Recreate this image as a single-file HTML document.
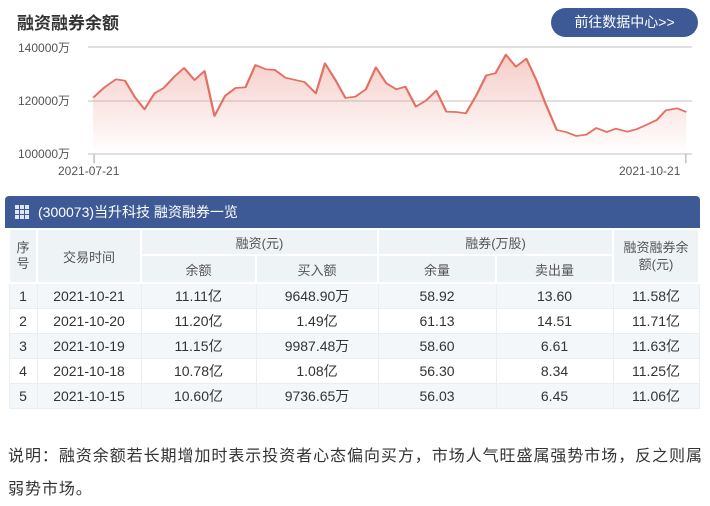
<!DOCTYPE html><html><head><meta charset="utf-8"><style>
body{margin:0;width:710px;height:504px;background:#fff;font-family:"Liberation Sans","Noto Sans CJK SC",sans-serif;color:#333;position:relative;overflow:hidden}
.a{position:absolute}
table{position:absolute;left:8px;top:228px;width:692px;border-collapse:collapse;font-size:14px;table-layout:fixed}
td{text-align:center;height:24px;padding:0;border:1px solid #e8eef2;color:#333}
.h td{background:#eef3f6;color:#555;font-size:13px;border:2px solid #fff}
tr.o td{background:#f3f7f9}
</style></head><body>
<div class="a" style="left:17px;top:9px;font-size:17px;font-weight:bold;color:#333">融资融券余额</div>
<div class="a" style="left:551px;top:8px;width:147px;height:29px;background:#3e5a96;border-radius:15px;color:#fff;font-size:14px;line-height:29px;text-align:center">前往数据中心&gt;&gt;</div>
<svg class="a" style="left:0;top:0" width="710" height="180">
<defs><linearGradient id="g" x1="0" y1="0" x2="0" y2="1"><stop offset="0" stop-color="#eb9a90" stop-opacity=".5"/><stop offset="1" stop-color="#eb9a90" stop-opacity="0"/></linearGradient></defs>
<g stroke="#d6d6d6" stroke-width="1.5"><line x1="88" y1="47" x2="692" y2="47"/><line x1="88" y1="101" x2="692" y2="101"/><line x1="88" y1="154" x2="692" y2="154"/></g>
<g transform="scale(0.4545,0.3333)">
<polygon fill="url(#g)" points="205,462 205,293 230,262 255,238 275,242 297,292 318,328 340,280 360,264 385,228 405,204 428,240 450,213 472,348 495,288 518,264 540,262 562,195 585,208 605,210 628,233 650,240 670,246 695,280 715,190 738,240 760,294 782,290 805,268 827,202 850,250 872,268 892,260 915,320 937,302 960,272 982,335 1003,336 1025,340 1048,286 1070,226 1090,220 1113,164 1135,200 1158,176 1180,240 1200,310 1225,390 1245,396 1268,408 1290,404 1312,384 1335,396 1355,386 1380,395 1400,388 1420,376 1445,360 1465,331 1490,325 1510,336 1510,462"/>
<polyline fill="none" stroke="#e46f62" stroke-width="5" stroke-linejoin="round" points="205,293 230,262 255,238 275,242 297,292 318,328 340,280 360,264 385,228 405,204 428,240 450,213 472,348 495,288 518,264 540,262 562,195 585,208 605,210 628,233 650,240 670,246 695,280 715,190 738,240 760,294 782,290 805,268 827,202 850,250 872,268 892,260 915,320 937,302 960,272 982,335 1003,336 1025,340 1048,286 1070,226 1090,220 1113,164 1135,200 1158,176 1180,240 1200,310 1225,390 1245,396 1268,408 1290,404 1312,384 1335,396 1355,386 1380,395 1400,388 1420,376 1445,360 1465,331 1490,325 1510,336"/>
<line x1="207" y1="462" x2="207" y2="490" stroke="#bbb" stroke-width="3"/><line x1="1509" y1="462" x2="1509" y2="490" stroke="#bbb" stroke-width="3"/>
</g>
<g font-size="12" fill="#555" font-family="Liberation Sans,Noto Sans CJK SC,sans-serif"><text x="18" y="52">140000万</text><text x="18" y="105">120000万</text><text x="18" y="158">100000万</text><text x="58" y="175">2021-07-21</text><text x="619" y="175">2021-10-21</text></g>
</svg>
<div class="a" style="left:5px;top:196px;width:695px;height:32px;background:#3e5a96;border-radius:4px 4px 0 0;color:#fff;font-size:14px;line-height:32px">
<svg style="position:absolute;left:10px;top:9px" width="14" height="14"><rect width="14" height="14" fill="#dfe5f0"/><g stroke="#3e5a96" stroke-width="1"><line x1="0" y1="4.5" x2="14" y2="4.5"/><line x1="0" y1="9.5" x2="14" y2="9.5"/><line x1="4.5" y1="0" x2="4.5" y2="14"/><line x1="9.5" y1="0" x2="9.5" y2="14"/></g></svg>
<span style="position:absolute;left:33px">(300073)当升科技 融资融券一览</span></div>
<table>
<colgroup><col style="width:28px"><col style="width:104px"><col style="width:115px"><col style="width:122px"><col style="width:118px"><col style="width:117px"><col></colgroup>
<tr class="h"><td rowspan="2" style="line-height:16px">序<br>号</td><td rowspan="2">交易时间</td><td colspan="2">融资(元)</td><td colspan="2">融券(万股)</td><td rowspan="2" style="line-height:17px">融资融券余<br>额(元)</td></tr>
<tr class="h" style="height:28px"><td>余额</td><td>买入额</td><td>余量</td><td>卖出量</td></tr>
<tr class="o"><td>1</td><td>2021-10-21</td><td>11.11亿</td><td>9648.90万</td><td>58.92</td><td>13.60</td><td>11.58亿</td></tr>
<tr><td>2</td><td>2021-10-20</td><td>11.20亿</td><td>1.49亿</td><td>61.13</td><td>14.51</td><td>11.71亿</td></tr>
<tr class="o"><td>3</td><td>2021-10-19</td><td>11.15亿</td><td>9987.48万</td><td>58.60</td><td>6.61</td><td>11.63亿</td></tr>
<tr><td>4</td><td>2021-10-18</td><td>10.78亿</td><td>1.08亿</td><td>56.30</td><td>8.34</td><td>11.25亿</td></tr>
<tr class="o"><td>5</td><td>2021-10-15</td><td>10.60亿</td><td>9736.65万</td><td>56.03</td><td>6.45</td><td>11.06亿</td></tr>
</table>
<div class="a" style="left:8px;top:440px;width:706px;font-size:16px;letter-spacing:0.95px;line-height:33px;color:#333">说明：融资余额若长期增加时表示投资者心态偏向买方，市场人气旺盛属强势市场，反之则属弱势市场。</div>
</body></html>
